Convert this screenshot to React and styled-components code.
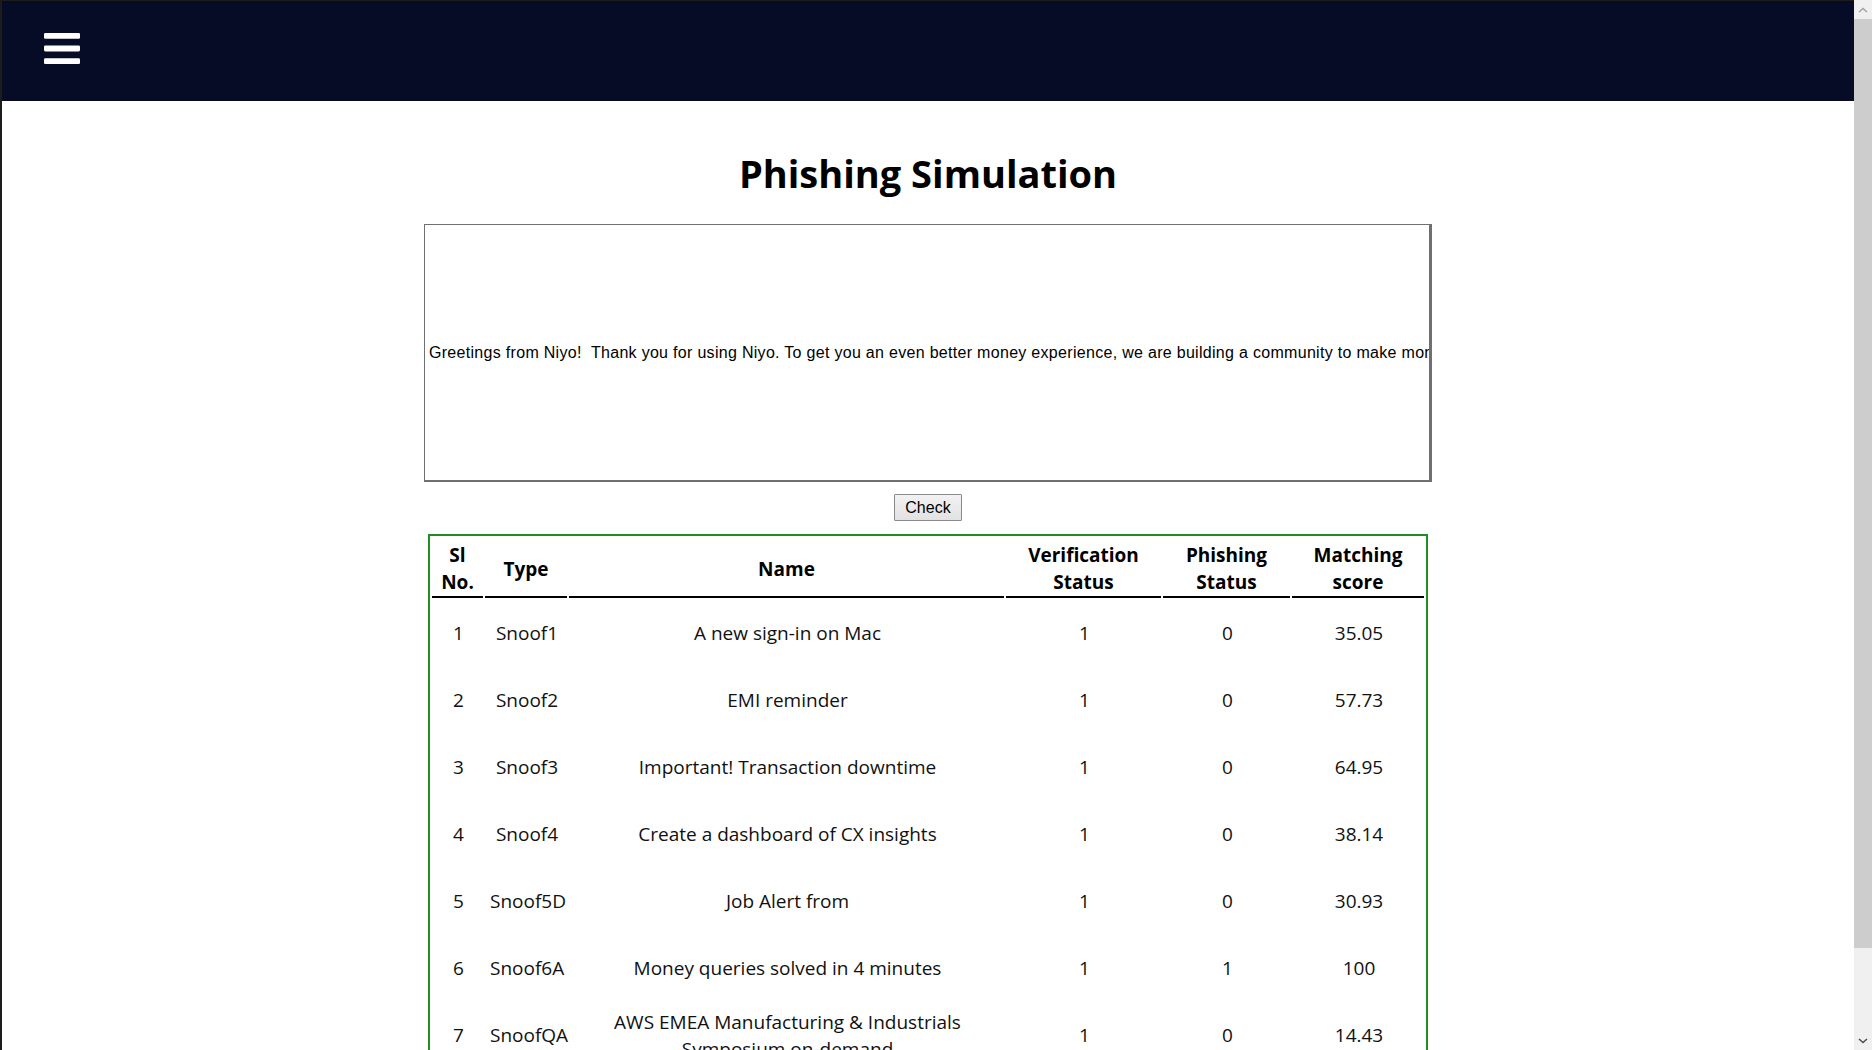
import React from "react";
import styled, { createGlobalStyle } from "styled-components";

const GlobalStyle = createGlobalStyle`
  html, body {
    margin: 0;
    padding: 0;
    height: 100%;
    overflow: hidden;
  }
  body {
    font-family: "Segoe UI", "Open Sans", sans-serif;
    background: #ffffff;
    color: #111;
  }
  #root { height: 100%; }
`;

const Shell = styled.div`
  display: flex;
  height: 100vh;
  background: #ffffff;
`;

const Viewport = styled.div`
  flex: 1;
  min-width: 0;
  overflow: hidden;
  border-left: 2px solid #1c1c1c;
  border-top: 1px solid #1c1c1c;
`;

const Navbar = styled.nav`
  height: 100px;
  background: #060b26;
  display: flex;
  align-items: center;
`;

const MenuButton = styled.button`
  margin: 0 0 6px 42px;
  padding: 0;
  border: none;
  background: none;
  display: flex;
  cursor: pointer;
`;

const Content = styled.main`
  display: flex;
  flex-direction: column;
  align-items: center;
`;

const Title = styled.h1`
  margin: 47px 0 26px;
  font-size: 38px;
  line-height: 50px;
  font-weight: 700;
  color: #000;
`;

const EmailFrame = styled.div`
  box-sizing: border-box;
  width: 1008px;
  height: 258px;
  border: 1px solid #707070;
  border-right-width: 3px;
  border-bottom-width: 2px;
  display: flex;
  align-items: center;
  overflow: hidden;
  white-space: nowrap;
  padding: 0 4px;
  font-family: "Liberation Sans", Arial, sans-serif;
  font-size: 16px;
  letter-spacing: 0.3px;
  color: #000;
`;

const CheckButton = styled.button`
  margin-top: 12px;
  box-sizing: border-box;
  height: 27px;
  padding: 0 10px;
  border: 1px solid #8a8a8a;
  border-radius: 1px;
  background: linear-gradient(#f2f2f2, #e2e2e2);
  font-family: "Liberation Sans", Arial, sans-serif;
  font-size: 16px;
  color: #000;
`;

const ResultTable = styled.table`
  margin-top: 13px;
  width: 1000px;
  table-layout: fixed;
  border: 2px solid #228b22;
  border-spacing: 2px;
  font-size: 19px;
`;

const HeadCell = styled.th`
  padding: 4px 2px 0;
  font-weight: 700;
  line-height: 27px;
  color: #000;
  text-align: center;
  vertical-align: middle;
  border-bottom: 2px solid #000;
`;

const Row = styled.tr`
  height: 65px;
`;

const Cell = styled.td`
  padding: 4px 3px 2px 5px;
  line-height: 27px;
  font-weight: 400;
  color: #111;
  text-align: center;
  vertical-align: middle;
`;

const ScrollTrack = styled.div`
  width: 18px;
  flex: none;
  background: #f0f0f0;
  display: flex;
  flex-direction: column;
`;

const ArrowBox = styled.div`
  height: 19px;
  flex: none;
  display: flex;
  align-items: center;
  justify-content: center;
`;

const Thumb = styled.div`
  height: 929px;
  flex: none;
  background: #cdcdcd;
`;

const TrackRest = styled.div`
  flex: 1;
`;

const columns = [
  { label: ["Sl", "No."], width: 51 },
  { label: ["Type"], width: 82 },
  { label: ["Name"], width: 435 },
  { label: ["Verification", "Status"], width: 155 },
  { label: ["Phishing", "Status"], width: 127 },
  { label: ["Matching", "score"], width: 132 },
];

const rows = [
  [1, "Snoof1", "A new sign-in on Mac", 1, 0, "35.05"],
  [2, "Snoof2", "EMI reminder", 1, 0, "57.73"],
  [3, "Snoof3", "Important! Transaction downtime", 1, 0, "64.95"],
  [4, "Snoof4", "Create a dashboard of CX insights", 1, 0, "38.14"],
  [5, "Snoof5D", "Job Alert from", 1, 0, "30.93"],
  [6, "Snoof6A", "Money queries solved in 4 minutes", 1, 1, "100"],
  [7, "SnoofQA", "AWS EMEA Manufacturing & Industrials Symposium on-demand", 1, 0, "14.43"],
];

function BarsIcon() {
  return (
    <svg width="36" height="31" viewBox="0 0 36 31" aria-hidden="true">
      <rect x="0" y="0" width="36" height="5.8" rx="1.3" fill="#fff" />
      <rect x="0" y="12.6" width="36" height="5.8" rx="1.3" fill="#fff" />
      <rect x="0" y="25.2" width="36" height="5.8" rx="1.3" fill="#fff" />
    </svg>
  );
}

function Chevron({ up, color }) {
  return (
    <svg width="10" height="6" viewBox="0 0 10 6" aria-hidden="true">
      <path
        d={up ? "M1 5 L5 1.5 L9 5" : "M1 1 L5 4.5 L9 1"}
        fill="none"
        stroke={color}
        strokeWidth="1.6"
      />
    </svg>
  );
}

export default function App() {
  return (
    <>
      <GlobalStyle />
      <Shell>
        <Viewport>
          <Navbar>
            <MenuButton aria-label="menu">
              <BarsIcon />
            </MenuButton>
          </Navbar>
          <Content>
            <Title>Phishing Simulation</Title>
            <EmailFrame>
              Greetings from Niyo!&nbsp; Thank you for using Niyo. To get you an even better money experience, we are building a community to make money management simple and rewarding for everyone.
            </EmailFrame>
            <CheckButton>Check</CheckButton>
            <ResultTable>
              <colgroup>
                {columns.map((c, i) => (
                  <col key={i} style={{ width: c.width }} />
                ))}
              </colgroup>
              <thead>
                <tr>
                  {columns.map((c, i) => (
                    <HeadCell key={i}>
                      {c.label.map((l, j) => (
                        <React.Fragment key={j}>
                          {j > 0 && <br />}
                          {l}
                        </React.Fragment>
                      ))}
                    </HeadCell>
                  ))}
                </tr>
              </thead>
              <tbody>
                {rows.map((r) => (
                  <Row key={r[0]}>
                    {r.map((v, i) => (
                      <Cell key={i}>{v}</Cell>
                    ))}
                  </Row>
                ))}
              </tbody>
            </ResultTable>
          </Content>
        </Viewport>
        <ScrollTrack>
          <ArrowBox>
            <Chevron up color="#a3a3a3" />
          </ArrowBox>
          <Thumb />
          <TrackRest />
          <ArrowBox>
            <Chevron color="#505050" />
          </ArrowBox>
        </ScrollTrack>
      </Shell>
    </>
  );
}
